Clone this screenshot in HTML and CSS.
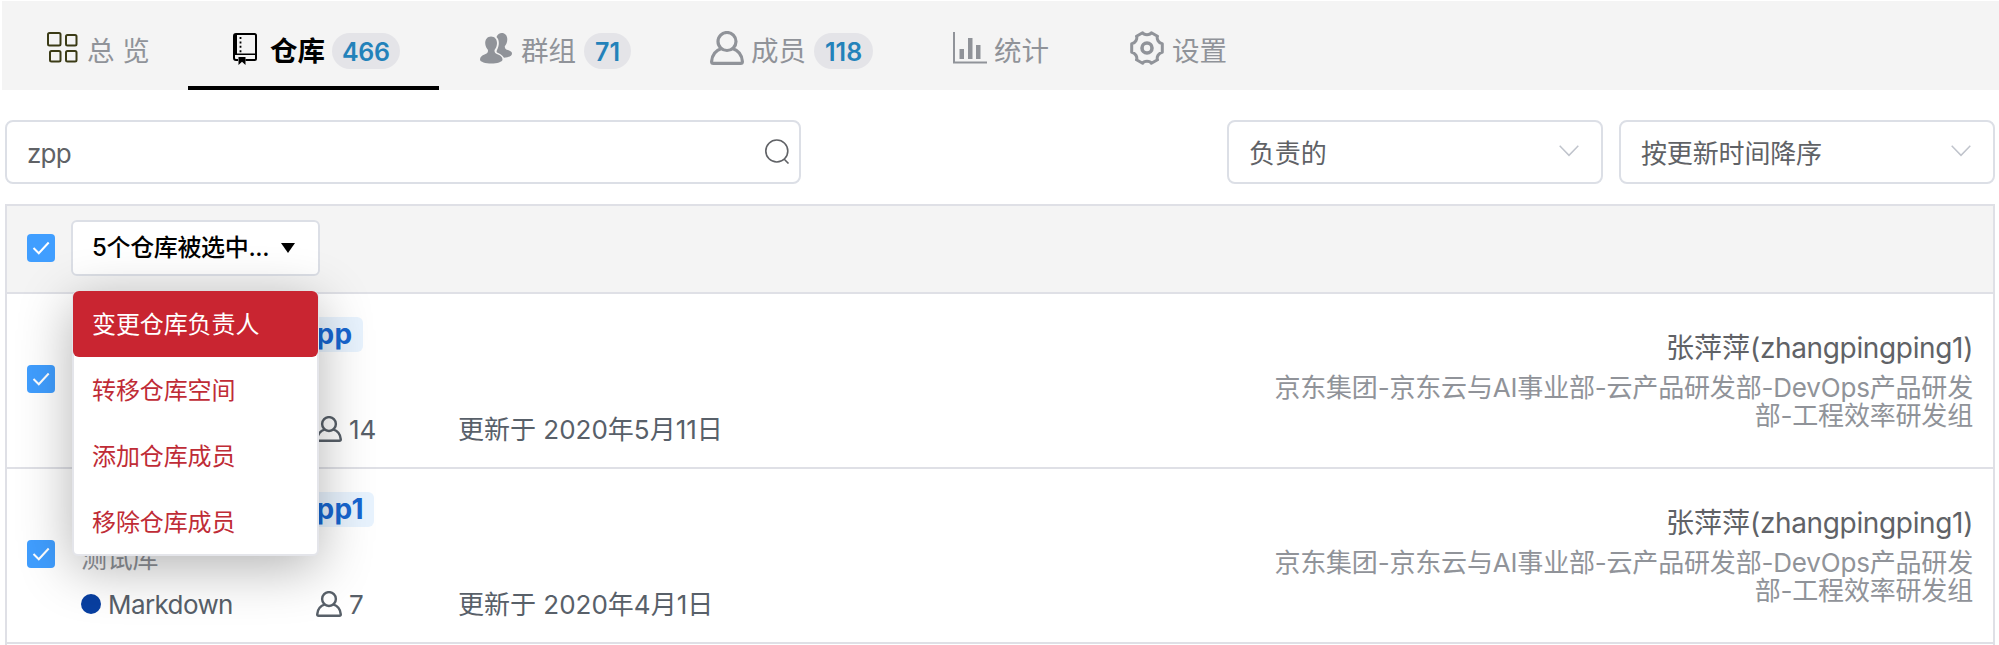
FILE: index.html
```html
<!DOCTYPE html>
<html lang="zh-CN">
<head>
<meta charset="utf-8">
<title>仓库</title>
<link rel="stylesheet" href="styles.css">
</head>
<body>
<svg class="defs" aria-hidden="true">
  <symbol id="user" viewBox="0 0 34 34">
    <g fill="none" stroke="currentColor" stroke-width="3.200" stroke-linejoin="round">
      <circle cx="17" cy="10.5" r="9"/>
      <path d="M11.5 17.5C5.5 19.5 2 24 1.6 30.5Q1.6 32.4 3.4 32.4H30.6Q32.4 32.4 32.4 30.5C32 24 28.500 19.5 22.500 17.5"/>
    </g>
  </symbol>
  <symbol id="check" viewBox="0 0 28 28">
    <path d="M6.500 14 11.800 19.300 21.700 8.500" fill="none" stroke="#fff" stroke-width="2"/>
  </symbol>
  <symbol id="chevron" viewBox="0 0 20 12">
    <path d="M.7.7 10 10.300 19.300.7" fill="none" stroke="currentColor" stroke-width="1.500"/>
  </symbol>
</svg>

<nav class="tabs">
  <a class="tab tab-overview">
    <svg class="icon-grid" viewBox="0 0 31 31"><g fill="none" stroke="#3b3b16" stroke-width="2"><rect x="1" y="1" width="12.500" height="12.500" rx="1.500"/><rect x="19" y="3" width="10.500" height="10.500" rx="1.500"/><rect x="3" y="19" width="10.500" height="10.500" rx="1.500"/><rect x="19" y="19" width="10.500" height="10.500" rx="1.500"/></g></svg>
    <span class="label">总 览</span>
  </a>
  <a class="tab tab-repos active">
    <svg class="icon-book" viewBox="0 0 24 32"><path d="M3 1H21.500Q23 1 23 2.500V25.500Q23 27 21.500 27H12.500M5 27H3Q1 27 1 25V3Q1 1 3 1" fill="none" stroke="#000" stroke-width="2"/><path d="M1 1H4V21H1zM1 20.500H23V22H1zM5.500 24H12.500V32L9 28.800 5.500 32z"/><path d="M7.500 4V20" stroke="#000" stroke-width="1.800" stroke-dasharray="2 2.400"/></svg>
    <span class="label">仓库</span><span class="badge">466</span>
  </a>
  <a class="tab tab-groups">
    <svg class="icon-groups" viewBox="0 0 32 31" fill="currentColor"><path d="M16.500 4C17.500 1.500 19.500 0 21.800 0 25 0 27.300 2.500 27.300 6.200 27.300 9 26.300 11.500 24.800 13.200 24.600 15.800 26 16.300 28 17.100 30.300 18 32 18.800 32 20.500 32 23 28.500 24.600 24 24.700 22 21.500 19 20.500 17 19.500 16.300 19 16.600 18 17 17 19.500 12.500 19.500 6.500 16.500 4z"/><path d="M11 3.500C14.800 3.500 17 6.400 17 10 17 13 16 15.300 14.500 17 14.300 19.800 15.500 20.400 18 21.500 20.500 22.500 22.500 24 22.500 26.500 22.500 29 17 30.500 11.300 30.500S0 29 0 26.500C0 24 2 22.500 4.500 21.500 7 20.400 8.200 19.800 8 17 6.500 15.300 5.200 13 5.200 10 5.200 6.400 7.500 3.500 11 3.500z"/></svg>
    <span class="label">群组</span><span class="badge">71</span>
  </a>
  <a class="tab tab-members">
    <svg class="icon-user"><use href="#user"/></svg>
    <span class="label">成员</span><span class="badge">118</span>
  </a>
  <a class="tab tab-stats">
    <svg class="icon-stats" viewBox="0 0 34 32" fill="currentColor"><path d="M0 0H2V29.500H34V31.500H0zM6.500 17H11V27H6.500zM15 6H19.500V27H15zM23 13H27.500V27H23z"/></svg>
    <span class="label">统计</span>
  </a>
  <a class="tab tab-settings">
    <svg class="icon-gear" viewBox="0 0 34 34"><g fill="none" stroke="currentColor" stroke-width="3" stroke-linejoin="round"><path d="M12.600 1.800C14 4.400 20 4.400 21.400 1.800L27.500 5.200C26.300 8 28.800 12.300 32.300 12.800V21.200C28.800 21.700 26.300 26 27.500 28.800L21.400 32.200C20 29.600 14 29.600 12.600 32.200L6.500 28.800C7.700 26 5.200 21.700 1.700 21.200V12.800C5.200 12.300 7.700 8 6.500 5.200z"/><circle cx="17" cy="17" r="5" stroke-width="3.600"/></g></svg>
    <span class="label">设置</span>
  </a>
</nav>

<div class="filters">
  <div class="field search"><span>zpp</span>
    <svg class="icon-search" viewBox="0 0 25 25"><g fill="none" stroke="#606266" stroke-width="1.600"><circle cx="11.800" cy="12" r="11"/><path d="M19 20 23.500 24.500"/></g></svg>
  </div>
  <div class="field select"><span>负责的</span><svg class="chevron"><use href="#chevron"/></svg></div>
  <div class="field select"><span>按更新时间降序</span><svg class="chevron"><use href="#chevron"/></svg></div>
</div>

<section class="table">
  <header class="bulk">
    <svg class="checkbox"><use href="#check"/></svg>
    <div class="dropdown">
      <button class="dropdown-btn"><span>5个仓库被选中...</span><i class="caret"></i></button>
      <ul class="menu">
        <li class="current">变更仓库负责人</li>
        <li>转移仓库空间</li>
        <li>添加仓库成员</li>
        <li>移除仓库成员</li>
      </ul>
    </div>
  </header>

  <article class="row">
    <svg class="checkbox"><use href="#check"/></svg>
    <div class="repo">
      <h3 class="title"><mark>zpp</mark></h3>
      <p class="desc"></p>
      <div class="meta">
        <span class="lang"></span>
        <span class="count"><svg class="icon-user-s"><use href="#user"/></svg>14</span>
        <span class="date">更新于 2020年5月11日</span>
      </div>
    </div>
    <div class="owner">
      <p class="owner-name">张萍萍<span>(zhangpingping1)</span></p>
      <p class="dept">京东集团-京东云与AI事业部-云产品研发部-DevOps产品研发<br>部-工程效率研发组</p>
    </div>
  </article>

  <article class="row">
    <svg class="checkbox"><use href="#check"/></svg>
    <div class="repo">
      <h3 class="title"><mark>zpp1</mark></h3>
      <p class="desc">测试库</p>
      <div class="meta">
        <span class="lang"><i class="dot"></i>Markdown</span>
        <span class="count"><svg class="icon-user-s"><use href="#user"/></svg>7</span>
        <span class="date">更新于 2020年4月1日</span>
      </div>
    </div>
    <div class="owner">
      <p class="owner-name">张萍萍<span>(zhangpingping1)</span></p>
      <p class="dept">京东集团-京东云与AI事业部-云产品研发部-DevOps产品研发<br>部-工程效率研发组</p>
    </div>
  </article>
</section>
</body>
</html>
```

FILE: styles.css
```css
* { box-sizing: border-box; }

body {
  margin: 0;
  height: 645px;
  overflow: hidden;
  padding: 1px 0 0 2px;
  background: #fff;
  color: #606266;
  font: 26px/30px Inter, "Noto Sans CJK SC", sans-serif;
}

svg { flex: none; display: block; }
.defs { position: absolute; width: 0; height: 0; }
h3, p, ul { margin: 0; padding: 0; }

/* Top navigation */
.tabs { display: flex; height: 89px; background: #f4f4f4; }
.tab {
  display: flex;
  align-items: center;
  height: 89px;
  padding: 11px 0 0 41px;
  color: #909399;
  font-size: 27.5px;
  white-space: nowrap;
}
.tab-overview { width: 186px; padding-left: 45px; }
.tab-repos { width: 251px; padding-left: 45px; }
.tab-groups { width: 231px; }
.tab-members { width: 243px; padding-left: 40px; }
.tab-stats { width: 176px; padding-left: 40px; }
.active { color: #000; font-weight: 700; border-bottom: 4px solid #000; padding-top: 15px; }
.label { line-height: 40px; }
.icon-grid { width: 31px; height: 31px; margin: -8px 9px 0 0; }
.icon-book { width: 24px; height: 32px; margin: -4px 13px 0 0; }
.icon-groups { width: 32px; height: 31px; margin: -6px 9px 0 0; }
.icon-user { width: 34px; height: 34px; margin: -6px 7px 0 0; }
.icon-stats { width: 34px; height: 32px; margin: -6px 7px 0 0; }
.icon-gear { width: 34px; height: 34px; margin: -6px 8px 0 0; }
.badge {
  height: 36px;
  margin-left: 8px;
  padding: 0 11px;
  border-radius: 18px;
  background: #e4e4e8;
  color: #2382ba;
  font-size: 25px;
  font-weight: 600;
  line-height: 38px;
}
.active .badge { margin-left: 7px; padding: 0 10px; letter-spacing: -.3px; }

/* Filters */
.filters { display: flex; padding: 30px 4px 0 3px; }
.field {
  display: flex;
  align-items: center;
  justify-content: space-between;
  height: 64px;
  padding: 2px 22px 0 20px;
  border: 2px solid #dcdfe6;
  border-radius: 8px;
}
.search { width: 796px; margin-right: auto; padding: 3px 9px 0 20px; letter-spacing: -.8px; }
.icon-search { width: 25px; height: 25px; margin-top: -5px; }
.select { width: 376px; margin-left: 16px; }
.select span { padding-top: 1px; letter-spacing: -.15px; }
.chevron { width: 20px; height: 12px; margin-top: -4px; color: #c0c4cc; }

/* Repository table */
.table {
  height: 441px;
  margin: 20px 4px 0 3px;
  border: 2px solid #dfe0e6;
  border-bottom: 0;
}
.bulk {
  display: flex;
  align-items: center;
  height: 88px;
  padding: 0 0 3px 20px;
  background: #f4f4f4;
  border-bottom: 2px solid #dfe0e6;
}
.checkbox { width: 28px; height: 28px; border-radius: 4px; background: #409eff; }
.dropdown { position: relative; margin-left: 16px; }
.dropdown-btn {
  display: flex;
  align-items: center;
  justify-content: space-between;
  width: 249px;
  height: 56px;
  padding: 0 23px 0 19px;
  border: 2px solid #dcdfe6;
  border-radius: 6px;
  background: #fff;
  color: #000;
  font: 500 24px/30px Inter, "Noto Sans CJK SC", sans-serif;
  letter-spacing: -.35px;
  white-space: nowrap;
}
.caret { border: 7.5px solid transparent; border-top: 10px solid #000; border-bottom: 0; }
.menu {
  position: absolute;
  top: 71px;
  left: 1px;
  width: 247px;
  height: 265px;
  border: 2px solid #e4e5ea;
  border-top: 0;
  border-radius: 6px;
  background: #fff;
  box-shadow: 0 12px 54px rgba(0, 0, 0, .3);
  list-style: none;
  font-size: 24px;
  letter-spacing: -.1px;
  line-height: 68px;
  color: #bf2c36;
}
.menu li { height: 66px; padding-left: 18px; }
.menu .current { margin: 0 -1px; padding-left: 19px; border-radius: 6px; background: #c92531; color: #fff; }

.row {
  display: flex;
  height: 175px;
  border-bottom: 2px solid #dfe0e6;
  padding-left: 20px;
}
.row .checkbox { margin-top: 71px; }
.repo { width: 900px; padding: 23px 0 0 26px; }
.title { padding-left: 209px; font-size: 28px; font-weight: 700; line-height: 34px; height: 34px; }
.title mark {
  display: inline-block;
  padding: 0 10px;
  border-radius: 6px;
  background: #e8f3fe;
  color: #1766d0;
  letter-spacing: .4px;
  line-height: 35px;
}
.desc { height: 72px; padding-top: 18px; color: #909399; letter-spacing: -.3px; }
.meta { display: flex; align-items: center; height: 30px; margin-top: -8px; color: #586069; }
.meta span { display: flex; align-items: center; white-space: pre; }
.lang { width: 235px; letter-spacing: -.6px; }
.dot { width: 20px; height: 20px; margin: -3px 7px 0 0; border-radius: 50%; background: #083fa1; }
.count { width: 142px; }
.icon-user-s { width: 26px; height: 26px; margin: -3px 7px 0 0; }
.owner { margin-left: auto; padding: 38px 20px 0 0; text-align: right; white-space: nowrap; }
.owner-name { font-size: 28px; line-height: 32px; }
.owner-name span { letter-spacing: -.35px; }
.dept { margin-top: 10px; line-height: 28px; color: #909399; letter-spacing: -.18px; }
```
